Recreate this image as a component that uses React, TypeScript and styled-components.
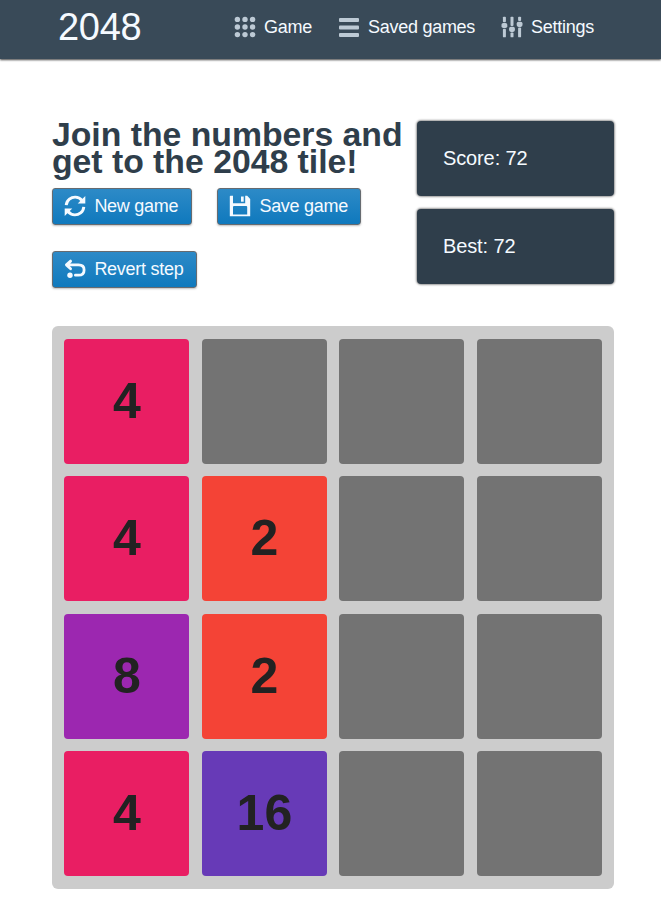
import React from 'react';
import styled, { createGlobalStyle } from 'styled-components';

const GlobalStyle = createGlobalStyle`
  *, *::before, *::after { box-sizing: border-box; }
  body {
    margin: 0;
    background: #fff;
    color: #2f3e4b;
    font-family: "Liberation Sans", Arial, sans-serif;
    overflow: hidden;
  }
`;

const Header = styled.header`
  display: flex;
  align-items: flex-start;
  height: 59px;
  padding-left: 58px;
  background: #394a58;
  color: #f5faff;
  box-shadow: 0 1px 2px rgba(0, 0, 0, 0.75);
`;

const Logo = styled.a`
  width: 176px;
  font-size: 38px;
  line-height: 54px;
  letter-spacing: -0.3px;
`;

const Nav = styled.nav`
  display: flex;
`;

const NavLink = styled.a<{ $width: number }>`
  display: flex;
  align-items: center;
  gap: 8px;
  width: ${(p) => p.$width}px;
  height: 54px;
  font-size: 18px;
  letter-spacing: -0.27px;
  white-space: nowrap;

  svg { color: #bdcad5; }
`;

const Icon = styled.svg`
  display: block;
  flex: none;
  width: 22px;
  height: 22px;
`;

const Page = styled.main`
  width: 562.5px;
  margin: 61px 0 0 51.9px;
`;

const Intro = styled.section`
  display: flex;
  justify-content: space-between;
  height: 206px;
`;

const IntroText = styled.div`
  width: 352px;
`;

const Title = styled.h1`
  margin: 0;
  padding-top: 1px;
  font-size: 33.75px;
  line-height: 27px;
  white-space: nowrap;
`;

const Actions = styled.div`
  display: flex;
  flex-wrap: wrap;
  gap: 26px 25px;
  margin-top: 13px;
`;

const Button = styled.button<{ $width: number }>`
  display: flex;
  align-items: center;
  gap: 8px;
  width: ${(p) => p.$width}px;
  height: 37px;
  padding: 0 0 2px 11px;
  border: 1px solid #666b70;
  border-radius: 3px;
  background: linear-gradient(#2d8ac7, #0f79bd);
  box-shadow: 0 1px 2px rgba(0, 0, 0, 0.25);
  color: #f5faff;
  font: 18px "Liberation Sans", Arial, sans-serif;
  letter-spacing: -0.27px;
  white-space: nowrap;
`;

const ButtonLabel = styled.span`
  padding: 2px 0 0 0.5px;
`;

const Scores = styled.aside`
  display: flex;
  flex: none;
  flex-direction: column;
  gap: 13px;
  width: 197.5px;
  margin-top: 1px;
`;

const ScoreCard = styled.div`
  height: 75px;
  padding-left: 26px;
  border-radius: 4px;
  background: #2f3e4b;
  box-shadow: 0 0 2px 1px rgba(0, 0, 0, 0.4);
  color: #f5faff;
  font-size: 20px;
  line-height: 74px;
  letter-spacing: -0.1px;
`;

const Board = styled.section`
  display: grid;
  grid-template-columns: repeat(4, 125px);
  grid-auto-rows: 125px;
  gap: 12.5px;
  padding: 12.5px;
  border-radius: 6px;
  background: #ccc;
`;

const tileColors: Record<number, string> = {
  0: '#737373',
  2: '#f44336',
  4: '#e91e63',
  8: '#9c27b0',
  16: '#673ab7',
};

const Tile = styled.div<{ $value: number }>`
  border-radius: 4px;
  background: ${(p) => tileColors[p.$value]};
  color: #222;
  font-size: 50px;
  font-weight: 700;
  line-height: 125px;
  text-align: center;
`;

const GridIcon = () => (
  <Icon viewBox="0 0 22 22" fill="currentColor">
    {[3.4, 11, 18.6].map((y) => [3.4, 11, 18.6].map((x) => (
      <circle key={`${x}-${y}`} cx={x} cy={y} r="2.7" />
    )))}
  </Icon>
);

const ListIcon = () => (
  <Icon viewBox="0 0 22 22" fill="currentColor">
    {[2, 9.5, 17].map((y) => (
      <rect key={y} x="1" y={y} width="20" height="4" rx="1" />
    ))}
  </Icon>
);

const SlidersIcon = () => (
  <Icon viewBox="0 0 22 22" fill="currentColor">
    {[[3.4, 9.5], [11, 13.3], [18.6, 8.3]].map(([x, y]) => (
      <g key={x}>
        <rect x={x - 1.5} y="0.7" width="3" height={y - 4} rx="0.9" />
        <rect x={x - 2.9} y={y - 2.6} width="5.8" height="5.2" rx="1.8" />
        <rect x={x - 1.5} y={y + 3.3} width="3" height={18 - y} rx="0.9" />
      </g>
    ))}
  </Icon>
);

const RefreshIcon = () => (
  <Icon viewBox="0 0 22 22" fill="none" stroke="currentColor" strokeWidth="2.9">
    <path d="M2.2 10.2C2.7 4.7 7.2 2 11.3 2.1C14.3 2.2 16.5 3.6 18.3 5.7" />
    <path d="M19.8 11.8C19.3 17.3 14.8 20 10.7 19.9C7.7 19.8 5.5 18.4 3.7 16.3" />
    <path d="M21.3 1V8.4H13.7ZM.7 21V13.6H8.3Z" fill="currentColor" stroke="none" />
  </Icon>
);

const SaveIcon = () => (
  <Icon viewBox="0 0 22 22" fill="currentColor" fillRule="evenodd">
    <path d="M1.5.8H4V8.2H16.2V.8H18.2L21.2 4V21.2H.8V1.5Q.8.8 1.5.8ZM4 12V19.5H18.2V12Q18.2 11 17.2 11H5Q4 11 4 12Z" />
    <path d="M12 1.5H14.7V6.7H12Z" />
  </Icon>
);

const RevertIcon = () => (
  <Icon viewBox="0 0 22 22" fill="none" stroke="currentColor" strokeWidth="2.8" strokeLinecap="round" strokeLinejoin="round">
    <path d="M6.6 3.1L2.4 6.9L6.6 10.7M3 6.9H14.5C18 6.9 20.1 8.9 20.1 11.9C20.1 15.2 18 17.2 14.5 17.2H11.4" />
    <circle cx="6" cy="17.2" r="2.7" fill="currentColor" stroke="none" />
  </Icon>
);

const tiles = [
  4, 0, 0, 0,
  4, 2, 0, 0,
  8, 2, 0, 0,
  4, 16, 0, 0,
];

export default function App() {
  return (
    <>
      <GlobalStyle />
      <Header>
        <Logo>2048</Logo>
        <Nav>
          <NavLink $width={104}><GridIcon />Game</NavLink>
          <NavLink $width={163}><ListIcon />Saved games</NavLink>
          <NavLink $width={94}><SlidersIcon />Settings</NavLink>
        </Nav>
      </Header>
      <Page>
        <Intro>
          <IntroText>
            <Title>Join the numbers and<br />get to the 2048 tile!</Title>
            <Actions>
              <Button $width={140}><RefreshIcon /><ButtonLabel>New game</ButtonLabel></Button>
              <Button $width={144}><SaveIcon /><ButtonLabel>Save game</ButtonLabel></Button>
              <Button $width={145}><RevertIcon /><ButtonLabel>Revert step</ButtonLabel></Button>
            </Actions>
          </IntroText>
          <Scores>
            <ScoreCard>Score: 72</ScoreCard>
            <ScoreCard>Best: 72</ScoreCard>
          </Scores>
        </Intro>
        <Board>
          {tiles.map((value, index) => (
            <Tile key={index} $value={value}>{value || ''}</Tile>
          ))}
        </Board>
      </Page>
    </>
  );
}
